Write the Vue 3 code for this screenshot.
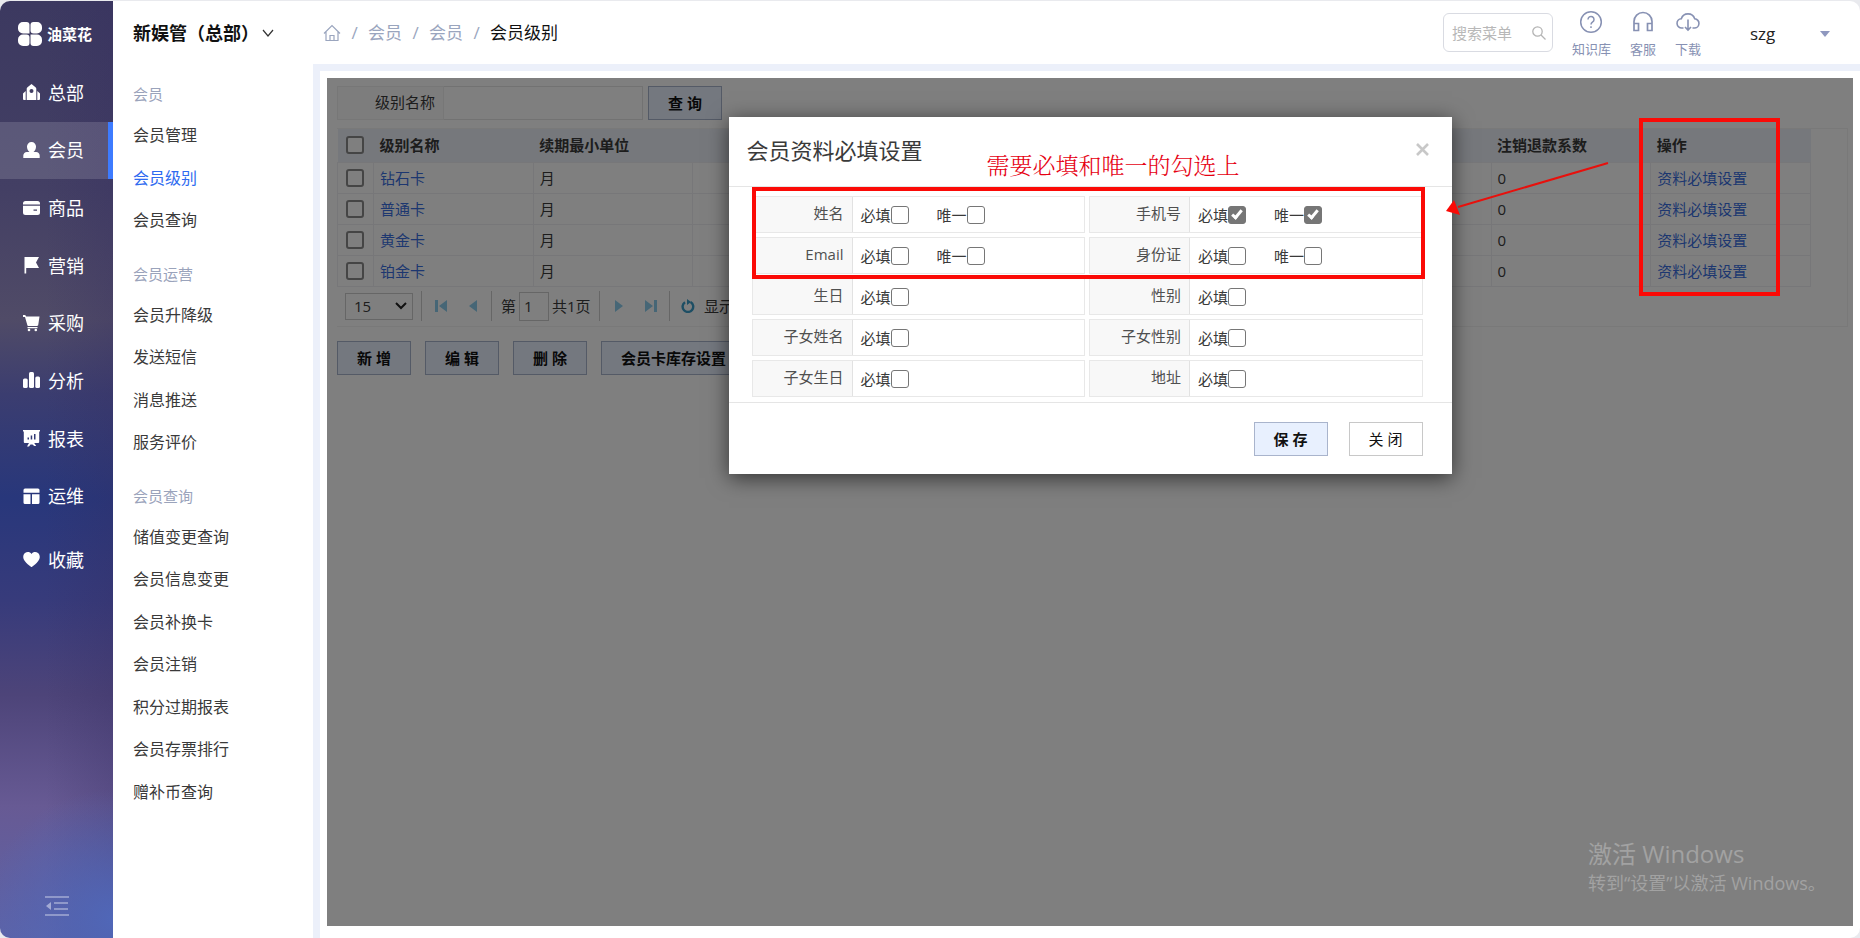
<script setup>
import { ref } from 'vue'

const mainMenu = [
  { name: '总部', icon: 'home' },
  { name: '会员', icon: 'user' },
  { name: '商品', icon: 'card' },
  { name: '营销', icon: 'flag' },
  { name: '采购', icon: 'cart' },
  { name: '分析', icon: 'bars' },
  { name: '报表', icon: 'board' },
  { name: '运维', icon: 'grid' },
]
const activeMain = ref('会员')

const subMenu = [
  { title: '会员', items: ['会员管理', '会员级别', '会员查询'] },
  { title: '会员运营', items: ['会员升降级', '发送短信', '消息推送', '服务评价'] },
  {
    title: '会员查询',
    items: ['储值变更查询', '会员信息变更', '会员补换卡', '会员注销', '积分过期报表', '会员存票排行', '赠补币查询'],
  },
]
const activeSub = ref('会员级别')

const levels = ['钻石卡', '普通卡', '黄金卡', '铂金卡']

const fields = ref([
  { label: '姓名', required: false, unique: false },
  { label: '手机号', required: true, unique: true },
  { label: 'Email', required: false, unique: false },
  { label: '身份证', required: false, unique: false },
  { label: '生日', required: false },
  { label: '性别', required: false },
  { label: '子女姓名', required: false },
  { label: '子女性别', required: false },
  { label: '子女生日', required: false },
  { label: '地址', required: false },
])
</script>

<template>
  <div class="app">
    <aside class="side">
      <div class="logo">
        <svg width="24" height="24" viewBox="0 0 24 24" fill="#fff">
          <path d="M5 0h3.500a3 3 0 0 1 3 3v8.500H5a5 5 0 0 1-5-5V5a5 5 0 0 1 5-5z" />
          <path d="M15.500 0H19a5 5 0 0 1 5 5v1.500a5 5 0 0 1-5 5h-3.500a3 3 0 0 1-3-3V3a3 3 0 0 1 3-3z" />
          <path d="M5 12.500h3.500a3 3 0 0 1 3 3V21a3 3 0 0 1-3 3H5a5 5 0 0 1-5-5v-1.500a5 5 0 0 1 5-5z" />
          <path d="M12.500 12.500H19a5 5 0 0 1 5 5V19a5 5 0 0 1-5 5h-3.500a3 3 0 0 1-3-3z" />
        </svg>
        <span>油菜花</span>
      </div>
      <nav class="main-nav">
        <a v-for="m in mainMenu" :key="m.name" href="#" :class="{ active: m.name === activeMain }" @click.prevent="activeMain = m.name">
          <svg width="17" height="17" viewBox="0 0 17 17" fill="#fff">
            <path v-if="m.icon === 'home'" fill-rule="evenodd" d="M8.500 0 12.500 3.200a2 2 0 0 1 .8 1.600V16H3.700V4.800a2 2 0 0 1 .8-1.600zM8.500 5a2 2 0 1 0 0 4 2 2 0 0 0 0-4zM2.700 7v9H1a1 1 0 0 1-1-1V9.500zM14.300 7v9H16a1 1 0 0 0 1-1V9.500z" />
            <path v-else-if="m.icon === 'user'" d="M8.500 0a4.500 4.500 0 0 1 4.500 4.800c0 2.200-1 4.200-2.500 5.200h2.500a3.500 3.500 0 0 1 3.700 3.500V16H.3v-2.500A3.500 3.500 0 0 1 4 10h2.500C5 9 4 7 4 4.800A4.500 4.500 0 0 1 8.500 0z" />
            <path v-else-if="m.icon === 'card'" fill-rule="evenodd" d="M2.500 1h12A2.500 2.500 0 0 1 17 3.500V4.500H0v-1A2.500 2.500 0 0 1 2.500 1zM0 5.700h17v6.800a2.500 2.500 0 0 1-2.500 2.500h-12A2.500 2.500 0 0 1 0 12.500zM10.500 9.500v1.300h3.500V9.500z" />
            <path v-else-if="m.icon === 'flag'" d="M1.500 0H16l-3 5.500 3 5.500H3.200v5.500H1.500z" />
            <g v-else-if="m.icon === 'cart'">
              <path d="M0 0h2.200l1 1.500H16.500l-1.300 8.800-1 .7H4.800l-.5-1L2 2H0zM4.500 12h10v1.300h-10z" />
              <circle cx="6" cy="15" r="1.300" /><circle cx="12.800" cy="15" r="1.300" />
            </g>
            <g v-else-if="m.icon === 'bars'">
              <rect y="6.500" width="4.700" height="9.500" rx="1.500" />
              <rect x="6" width="5" height="16" rx="1.500" />
              <rect x="12.300" y="4.500" width="4.700" height="11.500" rx="1.500" />
            </g>
            <path v-else-if="m.icon === 'board'" fill-rule="evenodd" d="M0 0h17v1.500h-.8V12a1 1 0 0 1-1 1h-4l2 3h-2L9.500 14.500h-2L6 16.500H4L6 13H1.800a1 1 0 0 1-1-1V1.500H0zM4.500 7.500v2H6v-2zM7.700 5.500v4h1.500v-4zM11 4v5.500h1.500V4z" />
            <path v-else d="M2 .5h13A1.500 1.500 0 0 1 16.500 2v2.800H.5V2A1.500 1.500 0 0 1 2 .5zM.5 6.200h7V16H2a1.500 1.500 0 0 1-1.500-1.500zM9 6.200h7.500v8.300A1.500 1.500 0 0 1 15 16H9z" />
          </svg>
          {{ m.name }}
        </a>
      </nav>
      <a class="fav" href="#">
        <svg width="17" height="16" viewBox="0 0 17 16" fill="#fff">
          <path d="M8.500 2C10-.3 13-.6 15 1.100c2.300 2.100 2.300 5.400.2 7.900-1.700 2.200-4 4.500-6.100 5.700-.4.300-.8.300-1.200 0C5.800 13.500 3.500 11.200 1.800 9-.3 6.500-.3 3.200 2 1.100 4-.6 7-.3 8.500 2z" />
        </svg>
        收藏
      </a>
      <button class="fold" aria-label="收起菜单">
        <svg width="24" height="20" viewBox="0 0 24 20" fill="none" stroke="#a3aad4" stroke-width="1.600">
          <path d="M0 1h24M9 7h14M9 13h14M0 19h24" />
          <path d="M6 6v8L1 10z" fill="#a3aad4" stroke="none" />
        </svg>
      </button>
    </aside>

    <div class="right">
      <header class="top">
        <button class="org">
          新娱管（总部）
          <svg width="12" height="8" viewBox="0 0 12 8" fill="none" stroke="#333" stroke-width="1.200"><path d="M1 1l5 6 5-6" /></svg>
        </button>
        <nav class="crumbs">
          <svg width="18" height="18" viewBox="0 0 18 18" fill="none" stroke="#9aa5be" stroke-width="1.200">
            <path d="M1 9.500 9 1.500l8 8M3 8v8.500h12V8M7 16.500v-5h4v5" />
          </svg>
          <i>/</i><a href="#">会员</a><i>/</i><a href="#">会员</a><i>/</i><b>会员级别</b>
        </nav>
        <label class="search">
          <input type="text" placeholder="搜索菜单" aria-label="搜索菜单" />
          <svg width="14" height="14" viewBox="0 0 14 14" fill="none" stroke="#b4b4b4" stroke-width="1.300">
            <circle cx="5.500" cy="5.500" r="4.700" /><path d="M9 9l4.500 4.500" />
          </svg>
        </label>
        <div class="tools">
          <a href="#">
            <svg width="24" height="24" viewBox="0 0 24 24" fill="none" stroke="#8791b3" stroke-width="1.500">
              <circle cx="12" cy="12" r="10.300" />
              <path d="M9 9.500a3 3 0 1 1 4.700 2.400c-1.100.8-1.700 1.300-1.700 2.600M12 16.200v1.800" />
            </svg>
            知识库
          </a>
          <a href="#">
            <svg width="24" height="24" viewBox="0 0 24 24" fill="none" stroke="#8791b3" stroke-width="1.700">
              <path d="M3 20.500V11.500a9 9 0 0 1 18 0v9M3 13.500h4.500v7H3zM16.500 13.500H21v7h-4.500z" />
            </svg>
            客服
          </a>
          <a href="#">
            <svg width="24" height="24" viewBox="0 0 24 24" fill="none" stroke="#8791b3" stroke-width="1.600">
              <path d="M7.500 18H6a4.600 4.600 0 0 1-.7-9.200 7 7 0 0 1 13.400 0A4.600 4.600 0 0 1 18 18h-1.500M12 9.500v10.500M9 17l3 3 3-3" />
            </svg>
            下载
          </a>
        </div>
        <button class="account">
          szg
          <svg width="10" height="6" viewBox="0 0 10 6" fill="#8f98bf"><path d="M0 0h10L5 6z" /></svg>
        </button>
      </header>

      <div class="body">
        <nav class="sub-nav">
          <section v-for="g in subMenu" :key="g.title">
            <h3>{{ g.title }}</h3>
            <a v-for="s in g.items" :key="s" href="#" :class="{ active: s === activeSub }" @click.prevent="activeSub = s">{{ s }}</a>
          </section>
        </nav>

        <main class="content">
          <div class="panel">
            <form class="query" @submit.prevent>
              <label for="levelName">级别名称</label>
              <input id="levelName" type="text" />
              <button class="btn">查 询</button>
            </form>

            <div class="grid">
              <table>
                <colgroup>
                  <col class="check-col" />
                  <col v-for="n in 9" :key="n" />
                </colgroup>
                <thead>
                  <tr>
                    <th><input type="checkbox" aria-label="全选" /></th>
                    <th>级别名称</th>
                    <th>续期最小单位</th>
                    <th v-for="n in 5" :key="n"></th>
                    <th>注销退款系数</th>
                    <th>操作</th>
                  </tr>
                </thead>
                <tbody>
                  <tr v-for="l in levels" :key="l">
                    <td><input type="checkbox" :aria-label="l" /></td>
                    <td><a href="#">{{ l }}</a></td>
                    <td>月</td>
                    <td v-for="n in 5" :key="n"></td>
                    <td>0</td>
                    <td><a href="#">资料必填设置</a></td>
                  </tr>
                </tbody>
              </table>
              <div class="pager">
                <div class="size">
                  <select aria-label="每页条数"><option>15</option></select>
                  <svg width="12" height="8" viewBox="0 0 12 8" fill="none" stroke="#222" stroke-width="2"><path d="M1 1l5 5 5-5" /></svg>
                </div>
                <div class="pair">
                  <button aria-label="首页"><svg width="12" height="12" viewBox="0 0 12 12" fill="#8ccdec"><path d="M0 0h3v12H0zM12 0v12L4 6z" /></svg></button>
                  <button aria-label="上一页"><svg width="12" height="12" viewBox="0 0 12 12" fill="#8ccdec"><path d="M10 0v12L2 6z" /></svg></button>
                </div>
                <div class="page">
                  <label for="pageNo">第</label><input id="pageNo" type="text" value="1" /><span>共1页</span>
                </div>
                <div class="pair">
                  <button aria-label="下一页"><svg width="12" height="12" viewBox="0 0 12 12" fill="#8ccdec"><path d="M2 0v12l8-6z" /></svg></button>
                  <button aria-label="末页"><svg width="12" height="12" viewBox="0 0 12 12" fill="#8ccdec"><path d="M9 0h3v12H9zM0 0v12l8-6z" /></svg></button>
                </div>
                <div class="info">
                  <button aria-label="刷新">
                    <svg width="14" height="14" viewBox="0 0 14 14" fill="none" stroke="#3a9cc8" stroke-width="2.400">
                      <path d="M4 3.200A5.300 5.300 0 1 0 9.500 3" /><path d="M6 0v6l4-3z" fill="#3a9cc8" stroke="none" />
                    </svg>
                  </button>
                  <span>显示</span>
                </div>
              </div>
            </div>

            <div class="actions">
              <button class="btn">新 增</button>
              <button class="btn">编 辑</button>
              <button class="btn">删 除</button>
              <button class="btn">会员卡库存设置</button>
            </div>

            <div class="mask">
              <div class="dialog" role="dialog" aria-labelledby="dlgTitle">
                <div class="dlg-head">
                  <h2 id="dlgTitle">会员资料必填设置</h2>
                  <button aria-label="关闭窗口">
                    <svg width="13" height="13" viewBox="0 0 13 13" stroke="#c8c8c8" stroke-width="2.600"><path d="M1 1l11 11M12 1L1 12" /></svg>
                  </button>
                </div>
                <div class="dlg-body">
                  <div v-for="f in fields" :key="f.label" class="field">
                    <span class="name">{{ f.label }}</span>
                    <div class="opts">
                      <label>必填<input v-model="f.required" type="checkbox" /></label>
                      <label v-if="'unique' in f">唯一<input v-model="f.unique" type="checkbox" /></label>
                    </div>
                  </div>
                </div>
                <div class="dlg-foot">
                  <button class="btn">保 存</button>
                  <button class="btn plain">关 闭</button>
                </div>
                <p class="note">需要必填和唯一的勾选上</p>
                <div class="frame frame-fields"></div>
                <svg class="arrow" width="164" height="54" viewBox="0 0 164 54" fill="#fb0a06">
                  <path d="M162 2 12 46" stroke="#e8100c" stroke-width="2" /><path d="M0 50 8 39 14 54z" />
                </svg>
              </div>
              <div class="frame frame-ops"></div>
              <div class="watermark">
                <strong>激活 Windows</strong>
                <span>转到“设置”以激活 Windows。</span>
              </div>
            </div>
          </div>
        </main>
      </div>
    </div>
  </div>
</template>

<style>
body {
  margin: 0;
  background: #e9eaee;
}
</style>

<style scoped>
.app {
  display: flex;
  box-sizing: border-box;
  min-height: 100vh;
  border-top: 1px solid #e9eaee;
  font: 15px/20px "Open Sans", "Noto Sans CJK SC", sans-serif;
  color: #3a3a3a;
}
.app *,
.app *::before {
  box-sizing: border-box;
}
a {
  color: inherit;
  text-decoration: none;
}
button,
input,
select {
  margin: 0;
  font: inherit;
  color: inherit;
}
button {
  padding: 0;
  border: 0;
  background: none;
}
svg {
  display: block;
  flex: none;
}

/* main navigation */
.side {
  display: flex;
  flex-direction: column;
  flex: none;
  width: 113px;
  border-radius: 10px 0 0 10px;
  color: #fff;
  background:
    radial-gradient(circle at 100% 98%, #5067b8 0, transparent 130px),
    linear-gradient(90deg, transparent 40%, #342b6040 100%),
    linear-gradient(180deg, #3c3960 0, #433f64 20%, #504b67 34%, #3b3d70 42%, #28377b 53%, #373b7b 64%, #4d4479 74%, #675a94 86%, #5c63a8 100%);
}
.logo {
  display: flex;
  align-items: center;
  gap: 5px;
  height: 63px;
  padding: 2px 0 0 18px;
  font-size: 15px;
  font-weight: 700;
}
.main-nav {
  display: flex;
  flex-direction: column;
  height: 461px;
}
.main-nav a,
.fav {
  display: flex;
  align-items: center;
  gap: 8px;
  padding-left: 23px;
  font-size: 18px;
}
.main-nav a {
  flex: 1;
}
.main-nav .active {
  border-right: 5px solid #3d7bff;
  background: #ffffff24;
}
.fav {
  height: 70px;
}
.fold {
  align-self: center;
  margin: auto 0 22px;
}

/* top bar */
.right {
  display: flex;
  flex: 1;
  flex-direction: column;
  min-width: 0;
  border-radius: 0 10px 10px 0;
  background: #fff;
}
.top {
  display: flex;
  align-items: center;
  height: 63px;
  padding: 0 30px 0 20px;
}
.org {
  display: flex;
  align-items: center;
  gap: 3px;
  width: 190px;
  font-size: 18px;
  font-weight: 700;
  color: #111;
}
.crumbs {
  display: flex;
  flex: 1;
  align-items: center;
  font-size: 17px;
  color: #9aa5be;
}
.crumbs i {
  width: 27px;
  font-style: normal;
  text-align: center;
}
.crumbs b {
  font-weight: inherit;
  color: #111;
}
.search {
  display: flex;
  align-items: center;
  width: 110px;
  height: 39px;
  padding: 0 6px 0 8px;
  border: 1px solid #d9dbe2;
  border-radius: 6px;
}
.search input {
  flex: 1;
  min-width: 0;
  padding: 0;
  border: 0;
  outline: 0;
}
.search input::placeholder {
  color: #b8b8b8;
}
.tools {
  display: flex;
  gap: 19px;
  margin-left: 19px;
  font-size: 13px;
  color: #8791b3;
}
.tools a {
  display: flex;
  flex-direction: column;
  align-items: center;
  gap: 5px;
  padding-top: 4px;
}
.account {
  display: flex;
  align-items: center;
  justify-content: space-between;
  width: 80px;
  margin: 2px 0 0 49px;
  font-size: 17px;
  color: #222;
}

/* secondary navigation */
.body {
  display: flex;
  flex: 1;
}
.sub-nav {
  display: flex;
  flex-direction: column;
  flex: none;
  width: 200px;
  height: 749px;
  padding: 11px 0 0 20px;
}
.sub-nav section {
  display: contents;
}
.sub-nav h3 {
  height: 39px;
  margin: 0;
  font: inherit;
  line-height: 39px;
  color: #9aa3bb;
}
.sub-nav section + section h3 {
  margin-top: 13px;
}
.sub-nav a {
  display: flex;
  flex: 1;
  align-items: center;
  font-size: 16px;
}
.sub-nav .active {
  color: #2f6bf0;
}

/* work area */
.content {
  display: flex;
  flex: 1;
  min-width: 0;
  padding: 7px 7px 12px;
  border: solid #ecf0fa;
  border-width: 7px 0 0 7px;
  border-radius: 0 0 10px 0;
}
.panel {
  position: relative;
  flex: 1;
  min-width: 0;
  padding: 8px 5px 0 10px;
}
.btn {
  min-width: 74px;
  height: 34px;
  padding: 0 19px;
  border: 1px solid #a9b4cc;
  background: #e8f0fe;
  font-weight: 700;
  color: #111;
}
.btn.plain {
  border-color: #c8c8c8;
  background: #fff;
  font-weight: 400;
}
.query {
  display: flex;
}
.query label {
  width: 107px;
  padding-right: 8px;
  border: 1px solid #eee;
  background: #fafafa;
  line-height: 31px;
  text-align: right;
}
.query input {
  width: 199px;
  margin-right: 5px;
  border: 1px solid #e4e4e4;
  border-left: 0;
}
.grid {
  margin-top: 8px;
  border: 1px solid #f2f2f2;
  border-left: 0;
}
table {
  width: calc(100% - 36px);
  border-collapse: collapse;
  table-layout: fixed;
}
.check-col {
  width: 36px;
}
th,
td {
  height: 31px;
  padding: 0 6px;
  border: 1px solid #eeeef2;
  text-align: left;
}
th {
  height: 33px;
  border: 0;
  background: #ecf0f9;
  font-weight: 700;
}
td:first-child,
th:first-child {
  padding: 0 0 0 8px;
}
td a {
  color: #3b6fe0;
}
input[type='checkbox'] {
  display: grid;
  place-items: center;
  flex: none;
  width: 18px;
  height: 18px;
  border: 1px solid #767676;
  border-radius: 3px;
  background: #fff;
  appearance: none;
}
.grid input[type='checkbox'] {
  border-width: 2px;
  border-color: #8a8a8a;
}
input[type='checkbox']:checked {
  background: #767676;
}
input[type='checkbox']:checked::before {
  content: '';
  width: 6px;
  height: 11px;
  margin-bottom: 3px;
  border: solid #fff;
  border-width: 0 3px 3px 0;
  transform: rotate(40deg);
}
.pager {
  display: flex;
  align-items: center;
  height: 39px;
  padding-left: 8px;
}
.size {
  display: flex;
  align-items: center;
  margin-right: 8px;
}
.size select {
  width: 68px;
  height: 27px;
  padding: 0 8px;
  border: 1px solid #ccc;
  background: none;
  appearance: none;
}
.size svg {
  margin-left: -18px;
  margin-right: 6px;
}
.pair,
.page,
.info {
  display: flex;
  align-items: center;
  height: 30px;
  border-left: 1px solid #ccc;
}
.pair {
  gap: 20px;
  width: 70px;
  padding-left: 13px;
}
.page {
  width: 108px;
  padding-left: 9px;
}
.page input {
  width: 30px;
  height: 29px;
  margin: 0 3px;
  padding: 0 4px;
  border: 1px solid #ccc;
}
.info {
  gap: 9px;
  padding-left: 11px;
}
.actions {
  display: flex;
  gap: 14px;
  margin-top: 14px;
}

/* dialog */
.mask {
  position: absolute;
  inset: 0;
  padding-top: 39px;
  background: #00000080;
}
.dialog {
  position: relative;
  width: 723px;
  margin: 0 auto;
  background: #fff;
  box-shadow: 0 4px 20px #0009;
}
.dlg-head {
  display: flex;
  align-items: center;
  justify-content: space-between;
  height: 70px;
  padding: 0 23px 4px 18px;
  border-bottom: 1px solid #e5e5e5;
}
.dlg-head h2 {
  margin: 0;
  font-size: 22px;
  font-weight: 400;
}
.dlg-body {
  display: grid;
  grid-template-columns: 1fr 1fr;
  gap: 4px;
  padding: 9px 29px 5px 23px;
  border-bottom: 1px solid #e5e5e5;
}
.field {
  display: flex;
  height: 37px;
  border: 1px solid #e8e8e8;
}
.field .name {
  width: 100px;
  padding-right: 8px;
  border-right: 1px solid #e2e2e2;
  background: #f8f8f8;
  line-height: 33px;
  text-align: right;
  color: #505050;
}
.opts {
  display: flex;
  gap: 28px;
  padding-left: 8px;
}
.opts label {
  display: flex;
  align-items: center;
}
.dlg-foot {
  display: flex;
  justify-content: flex-end;
  gap: 21px;
  padding: 19px 29px 18px;
}
.note {
  position: absolute;
  top: 35px;
  left: 258px;
  margin: 0;
  font-size: 23px;
  font-weight: 300;
  line-height: 26px;
  color: #e60012;
  font-family: "Noto Serif CJK SC", "Noto Sans CJK SC", serif;
}
.frame {
  position: absolute;
  border: 4px solid #fb0a06;
}
.frame-fields {
  top: 70px;
  left: 23px;
  width: 673px;
  height: 92px;
  pointer-events: none;
}
.frame-ops {
  top: 40px;
  right: 73px;
  width: 141px;
  height: 178px;
  pointer-events: none;
}
.arrow {
  position: absolute;
  top: 44px;
  left: 717px;
}
.watermark {
  position: absolute;
  right: 29px;
  bottom: 30px;
  display: flex;
  flex-direction: column;
  width: 236px;
  font-size: 18px;
  line-height: 26px;
  white-space: nowrap;
  color: #a2a2a2;
}
.watermark strong {
  font-size: 24px;
  font-weight: inherit;
  line-height: 32px;
}
</style>
